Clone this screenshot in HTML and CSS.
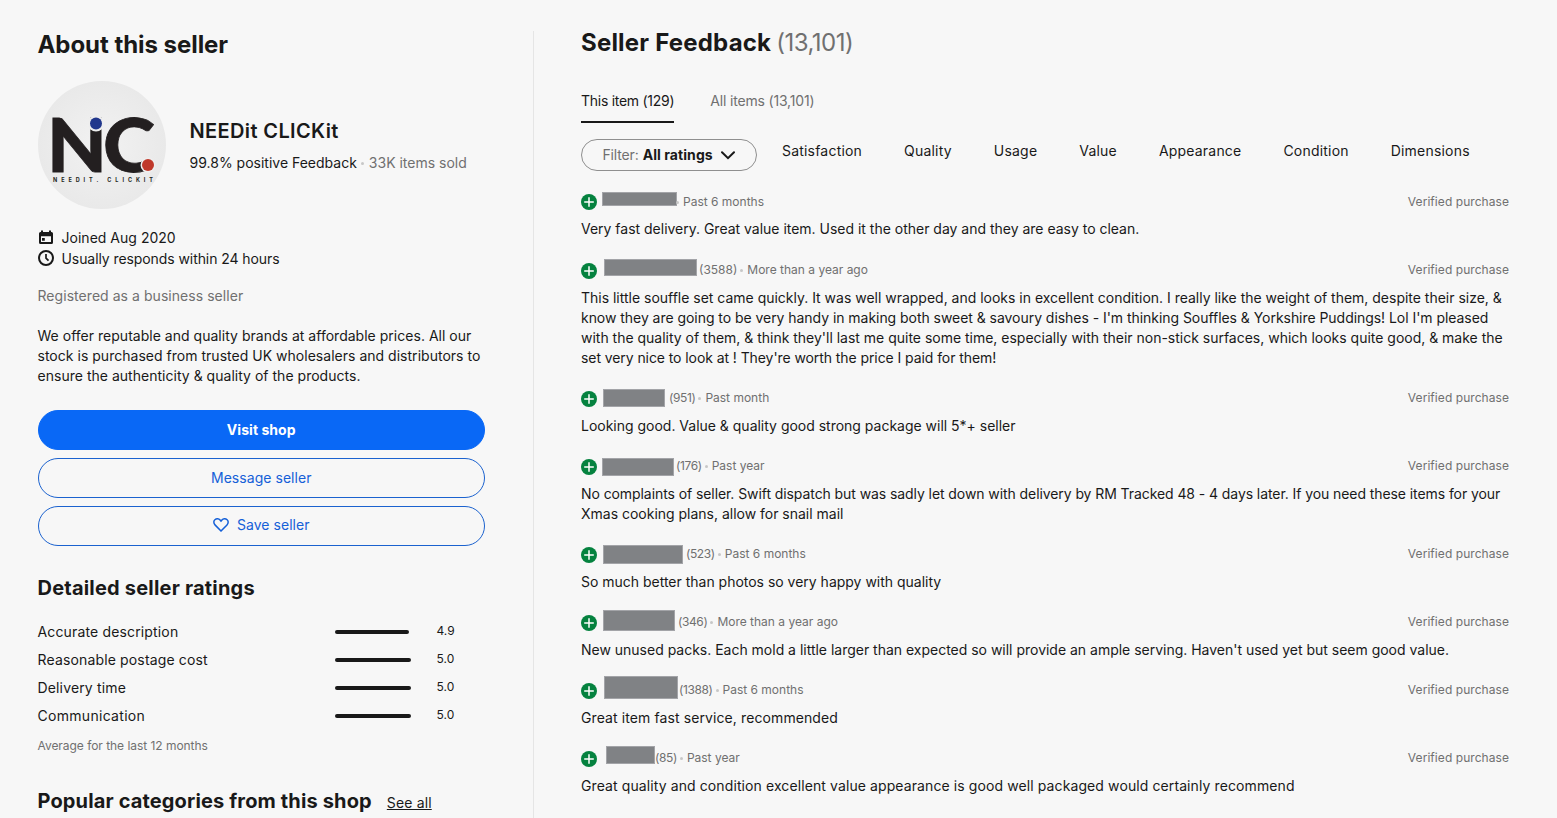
FILE: index.html
```html
<!DOCTYPE html>
<html lang="en-GB">
<head>
  <meta charset="UTF-8" />
  <title>Seller Feedback</title>
  <link rel="stylesheet" href="styles.css">
</head>
<body>
  <!-- Shared icon -->
  <svg class="defs" width="0" height="0">
    <symbol id="plus" viewBox="0 0 16 16">
      <circle cx="8" cy="8" r="8" fill="#05823f" />
      <path d="M8 3.200v9.600M3.200 8h9.600" stroke="#fff" stroke-width="1.500" />
    </symbol>
  </svg>

  <main class="page">
    <section class="about">
      <h2 class="title">About this seller</h2>

      <div class="profile">
        <svg class="logo" viewBox="0 0 128 128" role="img" aria-label="NEEDit CLICKit">
          <defs>
            <radialGradient id="logoBg">
              <stop offset="0" stop-color="#f2f2f2" />
              <stop offset="1" stop-color="#e9e9e9" />
            </radialGradient>
          </defs>
          <circle cx="64" cy="64" r="64" fill="url(#logoBg)" />
          <text class="logo-letter" x="9" y="91" textLength="60" lengthAdjust="spacingAndGlyphs">N</text>
          <text class="logo-letter" x="65" y="91" textLength="52" lengthAdjust="spacingAndGlyphs">C</text>
          <circle cx="58" cy="42.500" r="8" fill="#eee" />
          <circle cx="58" cy="42.500" r="6" fill="#21378c" />
          <circle cx="110" cy="84" r="7.500" fill="#eee" />
          <circle cx="110" cy="84" r="6" fill="#c0392b" />
          <text class="logo-name" x="15" y="101" textLength="100">NEEDIT. CLICKIT</text>
        </svg>
        <div class="profile-text">
          <h3 class="name">NEEDit CLICKit</h3>
          <p class="stats"><span>99.8% positive Feedback</span><i class="dot"></i><span class="sold">33K items sold</span></p>
        </div>
      </div>

      <ul class="facts">
        <li>
          <svg width="16" height="16" viewBox="0 0 16 16"><path fill="#191919" fill-rule="evenodd" d="M3 .5h2V2h6V.5h2V2h.5A1.500 1.500 0 0 1 15 3.500v9a1.500 1.500 0 0 1-1.500 1.500h-11A1.500 1.500 0 0 1 1 12.500v-9A1.500 1.500 0 0 1 2.500 2H3zM3 6.300V12h10V6.300zM4 8h2.800v2.800H4z" /></svg>
          <span>Joined Aug 2020</span>
        </li>
        <li>
          <svg class="clock" width="16" height="16" viewBox="0 0 16 16" fill="none" stroke="#191919" stroke-width="2"><circle cx="8" cy="8" r="7" /><path d="M8 4v4.200l2.500 2.500" stroke-width="1.700" /></svg>
          <span class="tight">Usually responds within 24 hours</span>
        </li>
      </ul>

      <p class="registered">Registered as a business seller</p>
      <p class="intro">We offer reputable and quality brands at affordable prices. All our<br>
        stock is purchased from trusted UK wholesalers and distributors to<br>
        ensure the authenticity &amp; quality of the products.</p>

      <div class="actions">
        <button class="btn primary">Visit shop</button>
        <button class="btn">Message seller</button>
        <button class="btn save">
          <svg width="16" height="14" viewBox="0 0 16 14" fill="none" stroke="#1560d8" stroke-width="1.500"><path d="M8 13 2 6.900C.4 5.200.5 2.900 1.900 1.700 3.500.3 5.800.5 7.100 2L8 3.100 8.900 2c1.300-1.500 3.600-1.700 5.200-.3 1.400 1.200 1.500 3.500-.1 5.200z" /></svg>
          Save seller
        </button>
      </div>

      <h3 class="subtitle">Detailed seller ratings</h3>
      <div class="ratings">
        <div class="rating"><span>Accurate description</span><div class="track"><div class="bar" style="width: 98%"></div></div><b>4.9</b></div>
        <div class="rating"><span>Reasonable postage cost</span><div class="track"><div class="bar" style="width: 100%"></div></div><b>5.0</b></div>
        <div class="rating"><span>Delivery time</span><div class="track"><div class="bar" style="width: 100%"></div></div><b>5.0</b></div>
        <div class="rating"><span class="wide">Communication</span><div class="track"><div class="bar" style="width: 100%"></div></div><b>5.0</b></div>
      </div>
      <p class="average">Average for the last 12 months</p>

      <div class="popular">
        <h3 class="subtitle">Popular categories from this shop</h3>
        <a class="see-all" href="#">See all</a>
      </div>
    </section>

    <section class="feedback">
      <h2 class="title">Seller Feedback <span class="total">(13,101)</span></h2>

      <nav class="tabs">
        <a class="tab active">This item (129)</a>
        <a class="tab">All items (13,101)</a>
      </nav>

      <div class="filters">
        <button class="filter">
          <span class="filter-label">Filter:</span> <strong>All ratings</strong>
          <svg width="14" height="9" viewBox="0 0 14 9" fill="none" stroke="#191919" stroke-width="2" stroke-linecap="round"><path d="m1 1.200 6 6 6-6" /></svg>
        </button>
        <div class="topics">
          <span>Satisfaction</span>
          <span>Quality</span>
          <span>Usage</span>
          <span>Value</span>
          <span>Appearance</span>
          <span>Condition</span>
          <span>Dimensions</span>
        </div>
      </div>

      <div class="reviews">
        <article class="review">
          <div class="meta">
            <svg class="plus"><use href="#plus" /></svg>
            <span class="mask mask-1"></span>
            <i class="dot"></i><span>Past 6 months</span>
            <span class="verified">Verified purchase</span>
          </div>
          <p>Very fast delivery. Great value item. Used it the other day and they are easy to clean.</p>
        </article>

        <article class="review">
          <div class="meta">
            <svg class="plus"><use href="#plus" /></svg>
            <span class="mask mask-2"></span>
            <span>(3588)</span><i class="dot"></i><span>More than a year ago</span>
            <span class="verified">Verified purchase</span>
          </div>
          <p>This little souffle set came quickly. It was well wrapped, and looks in excellent condition. I really like the weight of them, despite their size, &amp;<br>
            <span class="snug">know they are going to be very handy in making both sweet &amp; savoury dishes - I'm thinking Souffles &amp; Yorkshire Puddings! Lol I'm pleased</span><br>
            with the quality of them, &amp; think they'll last me quite some time, especially with their non-stick surfaces, which looks quite good, &amp; make the<br>
            <span class="tight">set very nice to look at ! They're worth the price I paid for them!</span></p>
        </article>

        <article class="review">
          <div class="meta">
            <svg class="plus"><use href="#plus" /></svg>
            <span class="mask mask-3"></span>
            <span class="count">(951)</span><i class="dot"></i><span>Past month</span>
            <span class="verified">Verified purchase</span>
          </div>
          <p>Looking good. Value &amp; quality good strong package will 5*+ seller</p>
        </article>

        <article class="review">
          <div class="meta">
            <svg class="plus"><use href="#plus" /></svg>
            <span class="mask mask-4"></span>
            <span class="count">(176)</span><i class="dot"></i><span>Past year</span>
            <span class="verified">Verified purchase</span>
          </div>
          <p><span class="tight">No complaints of seller. Swift dispatch but was sadly let down with delivery by RM Tracked 48 - 4 days later. If you need these items for your</span><br>
            Xmas cooking plans, allow for snail mail</p>
        </article>

        <article class="review">
          <div class="meta">
            <svg class="plus"><use href="#plus" /></svg>
            <span class="mask mask-5"></span>
            <span class="count">(523)</span><i class="dot"></i><span>Past 6 months</span>
            <span class="verified">Verified purchase</span>
          </div>
          <p>So much better than photos so very happy with quality</p>
        </article>

        <article class="review">
          <div class="meta">
            <svg class="plus"><use href="#plus" /></svg>
            <span class="mask mask-6"></span>
            <span class="count">(346)</span><i class="dot"></i><span>More than a year ago</span>
            <span class="verified">Verified purchase</span>
          </div>
          <p>New unused packs. Each mold a little larger than expected so will provide an ample serving. Haven't used yet but seem good value.</p>
        </article>

        <article class="review">
          <div class="meta">
            <svg class="plus"><use href="#plus" /></svg>
            <span class="mask mask-7"></span>
            <span class="count">(1388)</span><i class="dot"></i><span>Past 6 months</span>
            <span class="verified">Verified purchase</span>
          </div>
          <p class="loose">Great item fast service, recommended</p>
        </article>

        <article class="review">
          <div class="meta">
            <svg class="plus"><use href="#plus" /></svg>
            <span class="mask mask-8"></span>
            <span class="count">(85)</span><i class="dot"></i><span>Past year</span>
            <span class="verified">Verified purchase</span>
          </div>
          <p class="loose">Great quality and condition excellent value appearance is good well packaged would certainly recommend</p>
        </article>
      </div>
    </section>
  </main>
</body>
</html>
```

FILE: styles.css
```css
* {
  box-sizing: border-box;
}

body {
  margin: 0;
  height: 818px;
  overflow: hidden;
  background: #f7f7f7;
  color: #191919;
  font-family: Inter, "Liberation Sans", Arial, sans-serif;
  font-size: 14px;
  line-height: 20px;
  letter-spacing: 0.02px;
}

h2, h3, p, ul {
  margin: 0;
  padding: 0;
}

svg {
  flex: none;
}

.defs {
  display: none;
}

.tight {
  letter-spacing: -0.08px;
}

.snug {
  letter-spacing: -0.045px;
}

.page {
  display: flex;
  padding: 31px 48px 0 37.5px;
}

.title {
  font-size: 24px;
  line-height: 28px;
  font-weight: 700;
  letter-spacing: -0.05px;
  white-space: nowrap;
}

/* Left column */
.about {
  width: 447.5px;
  flex: none;
}

.profile {
  display: flex;
  align-items: center;
  gap: 24px;
  margin-top: 22px;
}

.logo {
  width: 128px;
  height: 128px;
}

.logo-letter {
  font-family: Lato, sans-serif;
  font-size: 75px;
  font-weight: 900;
  fill: #231f20;
  stroke: #231f20;
  stroke-width: 0.8px;
}

.logo-name {
  font-size: 5.5px;
  font-weight: 700;
  fill: #231f20;
}

.name {
  font-size: 20px;
  line-height: 28px;
  font-weight: 600;
  letter-spacing: 0.37px;
}

.stats {
  display: flex;
  align-items: center;
  margin-top: 8px;
  letter-spacing: 0;
  white-space: nowrap;
}

.sold,
.registered,
.average {
  color: #707070;
}

.dot {
  width: 3px;
  height: 3px;
  margin: 0 4px 0 3px;
  border-radius: 50%;
  background: #c7c7c7;
  flex: none;
}

.stats .dot {
  margin: 0 5px 0 4px;
}

.facts {
  margin-top: 18px;
  list-style: none;
}

.facts li {
  display: flex;
  align-items: center;
  gap: 8px;
  height: 21px;
}

.clock {
  margin-bottom: 1px;
}

.registered {
  margin-top: 17px;
  letter-spacing: 0.05px;
}

.intro {
  margin-top: 20px;
  white-space: nowrap;
}

.actions {
  display: flex;
  flex-direction: column;
  gap: 8px;
  margin-top: 24px;
}

.btn {
  display: flex;
  align-items: center;
  justify-content: center;
  gap: 8px;
  height: 40px;
  padding: 0;
  border: 1px solid #1b62cf;
  border-radius: 20px;
  background: transparent;
  color: #1560d8;
  font: inherit;
  letter-spacing: 0.05px;
}

.btn.primary {
  border-color: #0968f6;
  background: #0968f6;
  color: #fff;
  font-weight: 700;
}

.btn.save {
  padding-bottom: 2px;
}

.subtitle {
  font-size: 20px;
  line-height: 28px;
  font-weight: 700;
  letter-spacing: 0.14px;
  white-space: nowrap;
}

.actions + .subtitle {
  margin-top: 28px;
  letter-spacing: 0.2px;
}

.ratings {
  margin-top: 16px;
}

.rating {
  display: grid;
  grid-template-columns: 297.5px 76px 1fr;
  align-items: center;
  height: 28px;
  letter-spacing: 0.15px;
}

.wide {
  letter-spacing: 0.3px;
}

.track {
  height: 4px;
}

.bar {
  height: 4px;
  border-radius: 2px;
  background: #191919;
}

.rating b {
  padding: 0 0 3px 25.5px;
  font-size: 12px;
  font-weight: 400;
  letter-spacing: 0;
}

.average {
  margin-top: 6px;
  font-size: 12px;
  letter-spacing: -0.04px;
}

.popular {
  display: flex;
  align-items: baseline;
  gap: 15px;
  margin-top: 31px;
}

.see-all {
  color: inherit;
  letter-spacing: 0.15px;
}

/* Right column */
.feedback {
  flex: 1;
  margin-left: 48px;
  padding-left: 47px;
  border-left: 1px solid #e5e5e5;
  height: 800px;
}

.feedback .title {
  margin-top: -2px;
  letter-spacing: 0.2px;
}

.feedback .total {
  margin-left: -1px;
  color: #707070;
  font-weight: 400;
  letter-spacing: -0.5px;
}

.tabs {
  display: flex;
  gap: 36px;
  margin-top: 34px;
  letter-spacing: -0.18px;
}

.tab {
  height: 32px;
  color: #707070;
}

.tab.active {
  border-bottom: 2px solid #191919;
  color: #191919;
  letter-spacing: -0.27px;
}

.filters {
  display: flex;
  gap: 25px;
  margin-top: 16px;
}

.filter {
  display: flex;
  align-items: center;
  gap: 4px;
  width: 176px;
  height: 32px;
  padding: 0 20px 0 20.5px;
  border: 1px solid #8f8f8f;
  border-radius: 16px;
  background: transparent;
  color: #191919;
  font: inherit;
  letter-spacing: 0.07px;
  white-space: nowrap;
}

.filter-label {
  color: #707070;
  letter-spacing: -0.15px;
}

.filter svg {
  margin-left: 4px;
}

.topics {
  display: flex;
  gap: 42px;
  padding-top: 2px;
  letter-spacing: 0.2px;
}

.reviews {
  margin-top: 19px;
}

.review {
  margin-bottom: 18px;
}

.review p {
  margin-top: 6px;
  letter-spacing: -0.01px;
  white-space: nowrap;
}

.review p.loose {
  letter-spacing: 0.1px;
}

.meta {
  display: flex;
  align-items: center;
  height: 24px;
  color: #707070;
  font-size: 12px;
  letter-spacing: 0;
}

.plus {
  width: 16px;
  height: 16px;
  margin-top: 2px;
}

.review:first-child {
  margin-bottom: 19px;
}

.review:first-child p {
  margin-top: 5px;
}

.review:first-child .plus {
  margin-top: 0;
}

.count {
  letter-spacing: -0.4px;
}

.verified {
  margin-left: auto;
  letter-spacing: 0.06px;
}

/* Blanked out buyer names */
.mask {
  align-self: flex-start;
  flex: none;
  border: 1px solid #a3a4a8;
  background: #808285;
}

.mask-1 { width: 75px; height: 14px; margin: 2px -4px 0 5px; }
.mask-2 { width: 93px; height: 17px; margin: 1px 2px 0 7px; }
.mask-3 { width: 62px; height: 18px; margin: 3px 4px 0 6px; }
.mask-4 { width: 72px; height: 18px; margin: 4px 2px 0 5px; }
.mask-5 { width: 80px; height: 19px; margin: 3px 3px 0 6px; }
.mask-6 { width: 72px; height: 21px; margin: 0 3px 0 6px; }
.mask-7 { width: 74px; height: 23px; margin: -2px 1px 0 7px; }
.mask-8 { width: 49px; height: 18px; margin: 0 0 0 9px; }
```
